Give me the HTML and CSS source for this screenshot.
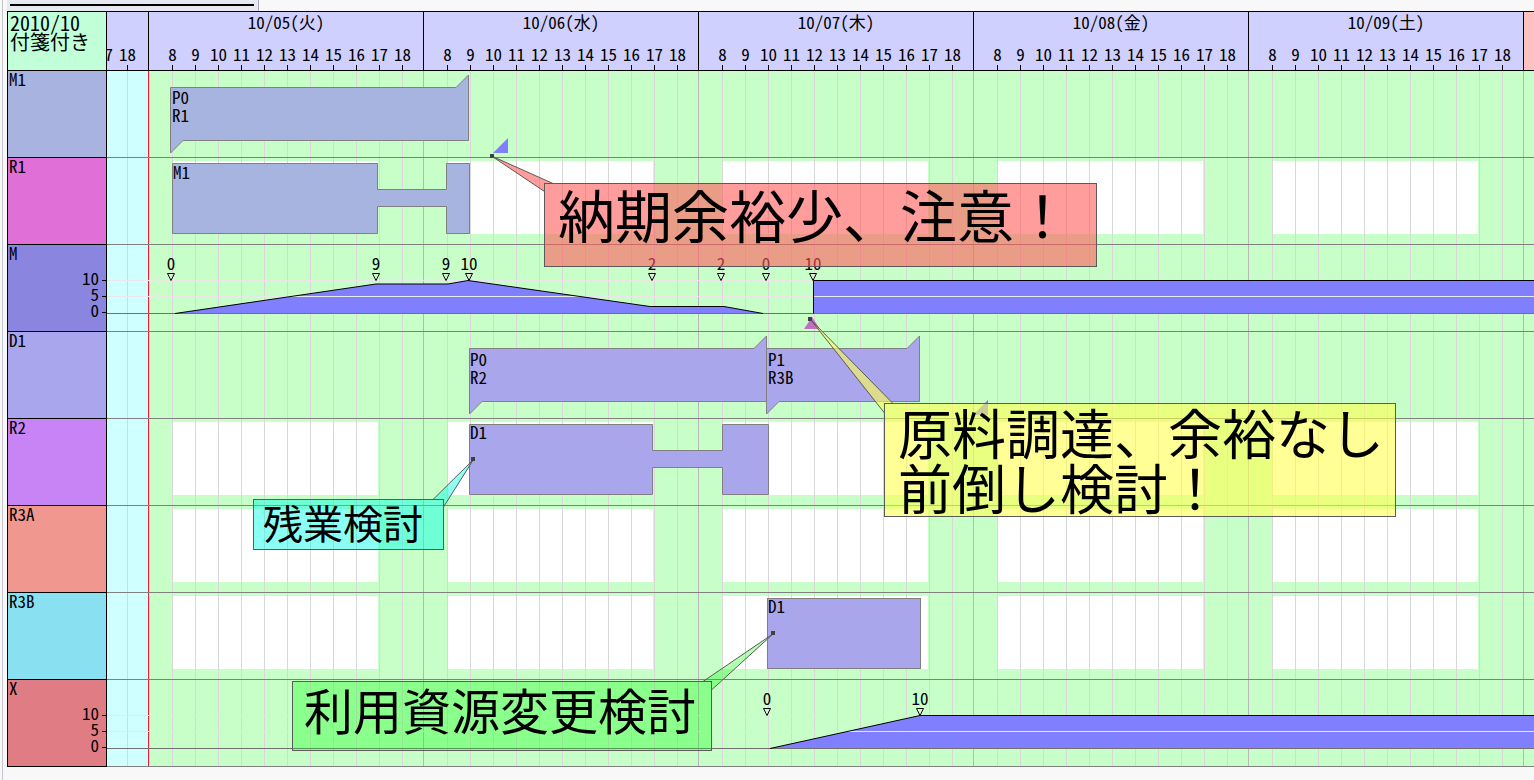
FILE: index.html
```html
<!DOCTYPE html>
<html lang="ja">
<head>
    <meta charset="utf-8">
    <title>付箋付き - 2010/10</title>
    <link rel="stylesheet" href="styles.css">
</head>
<body>
<div class="window">
    <div class="topbar"><div class="tab"></div></div>

    <div class="header">
        <div class="corner">2010/10<br>付箋付き</div>
        <div class="past">
            <div class="hours"><span>17</span><span>18</span></div>
        </div>
        <div class="day">
            <div class="date">10/05(火)</div>
            <div class="hours"><span>8</span><span>9</span><span>10</span><span>11</span><span>12</span><span>13</span><span>14</span><span>15</span><span>16</span><span>17</span><span>18</span></div>
        </div>
        <div class="day">
            <div class="date">10/06(水)</div>
            <div class="hours"><span>8</span><span>9</span><span>10</span><span>11</span><span>12</span><span>13</span><span>14</span><span>15</span><span>16</span><span>17</span><span>18</span></div>
        </div>
        <div class="day">
            <div class="date">10/07(木)</div>
            <div class="hours"><span>8</span><span>9</span><span>10</span><span>11</span><span>12</span><span>13</span><span>14</span><span>15</span><span>16</span><span>17</span><span>18</span></div>
        </div>
        <div class="day">
            <div class="date">10/08(金)</div>
            <div class="hours"><span>8</span><span>9</span><span>10</span><span>11</span><span>12</span><span>13</span><span>14</span><span>15</span><span>16</span><span>17</span><span>18</span></div>
        </div>
        <div class="day">
            <div class="date">10/09(土)</div>
            <div class="hours"><span>8</span><span>9</span><span>10</span><span>11</span><span>12</span><span>13</span><span>14</span><span>15</span><span>16</span><span>17</span><span>18</span></div>
        </div>
        <div class="tail"></div>
    </div>

    <div class="body">
        <div class="labels">
            <div class="label lbl-m1">M1</div>
            <div class="label lbl-r1">R1</div>
            <div class="label lbl-m">M
                <div class="axis"><span>10</span><span>5</span><span>0</span></div>
            </div>
            <div class="label lbl-d1">D1</div>
            <div class="label lbl-r2">R2</div>
            <div class="label lbl-r3a">R3A</div>
            <div class="label lbl-r3b">R3B</div>
            <div class="label lbl-x">X
                <div class="axis"><span>10</span><span>5</span><span>0</span></div>
            </div>
        </div>

        <div class="chart">
            <div class="row"></div>
            <div class="row"></div>
            <div class="row"></div>
            <div class="row"></div>
            <div class="row"></div>
            <div class="row"></div>
            <div class="row"></div>
            <div class="row"></div>

            <svg class="canvas" width="1427" height="696" viewBox="107 71 1427 696">
                <defs>
                    <pattern id="grid" patternUnits="userSpaceOnUse" x="148" y="0" width="275" height="20">
                        <path class="hour" d="M24.5 0v20M47.5 0v20M70.5 0v20M93.5 0v20M116.5 0v20M139.5 0v20M162.5 0v20M185.5 0v20M208.5 0v20M231.5 0v20M254.5 0v20"/>
                        <path class="dayline" d="M0.5 0v20"/>
                    </pattern>
                    <pattern id="work" patternUnits="userSpaceOnUse" x="148" y="0" width="275" height="20">
                        <rect x="24" y="0" width="206" height="20" fill="#fff"/>
                    </pattern>
                </defs>

                <!-- working hours of the resources -->
                <rect x="148" y="161" width="1375" height="73" fill="url(#work)"/>
                <rect x="148" y="422" width="1375" height="73" fill="url(#work)"/>
                <rect x="148" y="509" width="1375" height="73" fill="url(#work)"/>
                <rect x="148" y="596" width="1375" height="73" fill="url(#work)"/>

                <rect x="107" y="71" width="1427" height="696" fill="url(#grid)"/>
                <path class="now" d="M148.5 71V767"/>
                <path class="sep" d="M107 157.5H1534M107 244.5H1534M107 331.5H1534M107 418.5H1534M107 505.5H1534M107 592.5H1534M107 679.5H1534M107 766.5H1534"/>

                <!-- stock of M -->
                <path class="stock" d="M175 313.5L376 284H448L468 280.5L650 306.5H724L763 313.5Z"/>
                <path class="stock" d="M813.5 313.5V280.5H1534V313.5Z"/>
                <path class="level" d="M107 280.5H1534M107 296.5H1534"/>
                <path class="zero" d="M107 313.5H1534"/>
                <path class="edge" d="M175 313.5L376 284H448L468 280.5L650 306.5H724L763 313.5"/>
                <path class="edge" d="M813.5 313.5V280.5H1534"/>
                <g class="tag mark-num">
                    <text x="171" y="270">0</text>
                    <text x="376" y="270">9</text>
                    <text x="446" y="270">9</text>
                    <text x="469" y="270">10</text>
                    <text x="652" y="270">2</text>
                    <text x="721" y="270">2</text>
                    <text x="766" y="270">0</text>
                    <text x="813" y="270">10</text>
                </g>
                <path class="mark" d="M167.5 273.5h7l-3.5 7zM372.5 273.5h7l-3.5 7zM442.5 273.5h7l-3.5 7zM465.5 273.5h7l-3.5 7zM648.5 273.5h7l-3.5 7zM717.5 273.5h7l-3.5 7zM762.5 273.5h7l-3.5 7zM809.5 273.5h7l-3.5 7z"/>

                <!-- stock of X -->
                <path class="stock" d="M770 748.5L920 715.5H1534V748.5Z"/>
                <path class="level" d="M107 715.5H1534M107 731.5H1534"/>
                <path class="zero" d="M107 748.5H1534"/>
                <path class="edge" d="M770 748.5L920 715.5H1534"/>
                <g class="tag mark-num">
                    <text x="767" y="705">0</text>
                    <text x="920" y="705">10</text>
                </g>
                <path class="mark" d="M763.5 708.5h7l-3.5 7zM916.5 708.5h7l-3.5 7z"/>

                <!-- jobs -->
                <path class="bar-m" d="M170.5 87.5H456L468.5 75V140.5H183L170.5 153Z"/>
                <path class="bar-m" d="M172.5 163.5H377.5V189.5H446.5V163.5H469.5V233.5H446.5V206.5H377.5V233.5H172.5Z"/>
                <path class="bar-d" d="M469.5 348.5H754L766.5 336V401.5H482L469.5 414Z"/>
                <path class="bar-d" d="M766.5 348.5H907L919.5 336V401.5H779L766.5 414Z"/>
                <path class="bar-d" d="M469.5 424.5H652.5V450.5H722.5V424.5H768.5V494.5H722.5V467.5H652.5V494.5H469.5Z"/>
                <rect class="bar-d" x="767.5" y="598.5" width="153" height="70"/>
                <g class="tag">
                    <text x="172" y="104">P0</text>
                    <text x="172" y="122">R1</text>
                    <text x="173" y="179">M1</text>
                    <text x="470" y="366">P0</text>
                    <text x="470" y="384">R2</text>
                    <text x="768" y="366">P1</text>
                    <text x="768" y="384">R3B</text>
                    <text x="470" y="439">D1</text>
                    <text x="768" y="613">D1</text>
                </g>

                <path class="flag" d="M493 153H508V138Z"/>
                <path class="flag" d="M973 415H988V400Z"/>
                <path class="flag-p" d="M812 317L820 329H804Z"/>

                <!-- note pointers -->
                <path class="wedge-red" d="M491.5 156L553 183.5H544.5V191.5Z"/>
                <path class="wedge-line" d="M553 183.5L491.5 156L544.5 191.5"/>
                <path class="wedge-yellow" d="M810.5 319.5L893 403.5H884.5V413Z"/>
                <path class="wedge-line" d="M893 403.5L810.5 319.5L884.5 413"/>
                <path class="wedge-cyan" d="M473.5 459.5L433 499.5H443.5V507Z"/>
                <path class="wedge-line" d="M433 499.5L473.5 459.5L443.5 507"/>
                <path class="wedge-green" d="M773.5 633.5L703 681.5H711.5V690Z"/>
                <path class="wedge-line" d="M703 681.5L773.5 633.5L711.5 690"/>

                <rect class="pin" x="490" y="154" width="4" height="4"/>
                <rect class="pin" x="808" y="317" width="4" height="4"/>
                <rect class="pin" x="471" y="457" width="4" height="4"/>
                <rect class="pin" x="771" y="631" width="4" height="4"/>
            </svg>

            <div class="note note-red">納期余裕少、注意！</div>
            <div class="note note-yellow">原料調達、余裕なし<br>前倒し検討！</div>
            <div class="note note-cyan">残業検討</div>
            <div class="note note-green">利用資源変更検討</div>
        </div>
    </div>
</div>
</body>
</html>
```

FILE: styles.css
```css
body {
    margin: 0;
    background: #f8f8f8;
    color: #000;
    font: 17px "Noto Sans Mono CJK JP", "Liberation Sans Narrow", "Liberation Sans", sans-serif;
}
.window {
    margin-left: 2px;
    padding-left: 4px;
    border-left: solid 1px #c4c4cc;
    height: 780px;
    box-sizing: border-box;
    overflow: hidden;
}
.topbar {
    height: 11px;
    display: flex;
}
.tab {
    width: 252px;
    height: 11px;
    box-sizing: border-box;
    padding: 4px 4px 0 3px;
    background: #e8e8f2;
    border-right: solid 1px #a8a8b8;
}
.tab::before {
    content: "";
    display: block;
    height: 2px;
    background: #000;
}

/* time scale */
.header {
    display: flex;
    height: 60px;
    box-sizing: border-box;
    border-top: solid 1px #000;
    border-bottom: solid 1px #000;
    background: #d0d0ff;
}
.corner {
    flex: none;
    width: 100px;
    box-sizing: border-box;
    border-left: solid 1px #000;
    border-right: solid 1px #000;
    background: #c0ffd8;
    padding: 1px 0 0 2px;
    font-size: 20px;
    line-height: 19px;
}
.past {
    flex: none;
    width: 41px;
    overflow: hidden;
    display: flex;
    flex-direction: column;
}
.past .hours {
    margin-left: -14px;
    padding-left: 0;
    grid-template-columns: repeat(2, 23px);
}
.day {
    flex: none;
    width: 275px;
    box-sizing: border-box;
    border-left: solid 1px #000;
    display: flex;
    flex-direction: column;
}
.date {
    text-align: center;
    line-height: 20px;
    height: 20px;
}
.hours {
    margin-top: auto;
    display: grid;
    grid-template-columns: repeat(11, 23px);
    padding-left: 12px;
}
.hours span {
    line-height: 16px;
    text-align: center;
    white-space: nowrap;
}
.hours span::after {
    content: "";
    display: block;
    width: 1px;
    height: 5px;
    margin: 3px auto 0;
    background: #000;
}
.tail {
    flex: 1;
    border-left: solid 1px #000;
    background: #ffc0c0;
}

/* resource rows */
.body {
    display: flex;
}
.labels {
    flex: none;
    width: 100px;
    box-sizing: border-box;
    border-left: solid 1px #000;
    border-right: solid 1px #000;
}
.label {
    position: relative;
    height: 87px;
    box-sizing: border-box;
    border-bottom: solid 1px #000;
    padding-left: 1px;
    line-height: 16px;
}
.lbl-m1  { background: #a9b3df; }
.lbl-r1  { background: #e070d8; }
.lbl-m   { background: #8a86e0; }
.lbl-d1  { background: #aaa6ee; }
.lbl-r2  { background: #c884f4; }
.lbl-r3a { background: #f09890; }
.lbl-r3b { background: #88e0f0; }
.lbl-x   { background: #e07c84; }

.axis {
    position: absolute;
    right: 0;
    top: 25px;
    width: 40px;
}
.axis span {
    position: relative;
    display: block;
    height: 16px;
    line-height: 16px;
    text-align: right;
    padding-right: 7px;
}
.axis span::after {
    content: "";
    position: absolute;
    right: 0;
    top: 10px;
    width: 4px;
    height: 1px;
    background: #000;
}

.chart {
    flex: 1;
    position: relative;
}
.row {
    height: 87px;
    box-sizing: border-box;
    border-bottom: solid 1px #808080;
    background: linear-gradient(to right, #d0ffff 41px, #c8ffc8 41px);
}
.canvas {
    position: absolute;
    left: 0;
    top: 0;
}

/* drawing */
.hour    { stroke: #d8d8d8; shape-rendering: crispEdges; }
.dayline { stroke: #b8b8b8; shape-rendering: crispEdges; }
.now     { stroke: #ff1030; shape-rendering: crispEdges; }
.sep     { stroke: #808080; shape-rendering: crispEdges; }
.level   { stroke: #e8e8e8; shape-rendering: crispEdges; }
.zero    { stroke: #707070; shape-rendering: crispEdges; }
.stock   { fill: #8080ff; }
.edge    { fill: none; stroke: #000; }
.bar-m   { fill: #a8b4e0; stroke: #808080; }
.bar-d   { fill: #aaa6ec; stroke: #808080; }
.tag {
    font: 17px "Noto Sans Mono CJK JP", "Liberation Sans Narrow", "Liberation Sans", sans-serif;
    fill: #000;
}
.mark-num { text-anchor: middle; }
.mark    { fill: none; stroke: #000; }
.flag    { fill: #8080ff; }
.flag-p  { fill: #c070c0; }
.pin     { fill: #404040; }

.wedge-red    { fill: rgba(255, 90, 90, .6); }
.wedge-yellow { fill: rgba(255, 255, 80, .6); }
.wedge-cyan   { fill: rgba(0, 255, 230, .45); }
.wedge-green  { fill: rgba(0, 255, 0, .3); }
.wedge-line   { fill: none; stroke: #5a5a5a; }

/* sticky notes */
.note {
    position: absolute;
    box-sizing: border-box;
    border: solid 1px #5a5a5a;
    font-family: "Noto Sans CJK JP", sans-serif;
    white-space: nowrap;
    color: #000;
}
.note-red {
    left: 437px;
    top: 112px;
    width: 553px;
    height: 84px;
    background: rgba(255, 90, 90, .6);
    font-size: 57px;
    line-height: 58px;
    padding-left: 13px;
}
.note-yellow {
    left: 777px;
    top: 332px;
    width: 512px;
    height: 114px;
    background: rgba(255, 255, 80, .6);
    font-size: 54px;
    line-height: 55px;
    padding-left: 13px;
}
.note-cyan {
    left: 146px;
    top: 428px;
    width: 191px;
    height: 51px;
    background: rgba(0, 255, 230, .45);
    font-size: 40px;
    line-height: 44px;
    padding-left: 9px;
}
.note-green {
    left: 185px;
    top: 610px;
    width: 420px;
    height: 70px;
    background: rgba(0, 255, 0, .3);
    font-size: 49px;
    line-height: 54px;
    padding-left: 11px;
}
```
